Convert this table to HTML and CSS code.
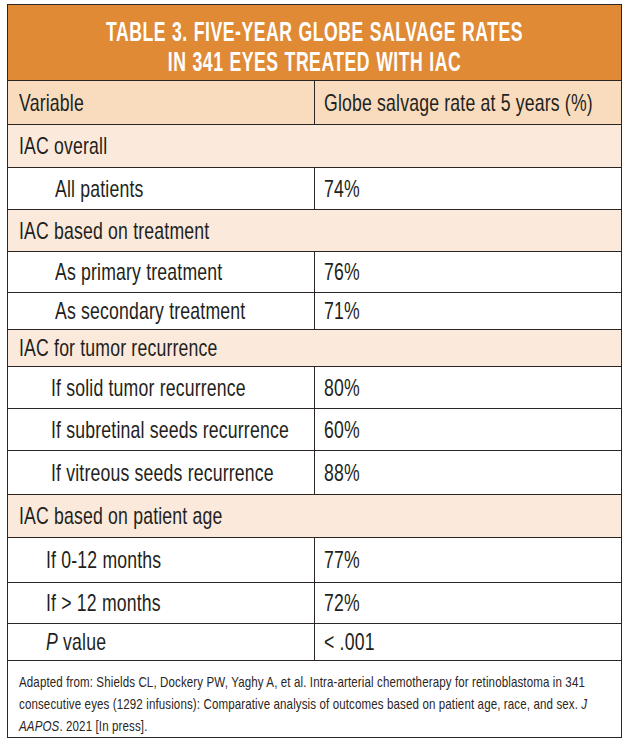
FILE: index.html
```html
<!DOCTYPE html>
<html lang="en">
<head>
<meta charset="utf-8">
<title>Table 3</title>
<link rel="stylesheet" href="styles.css">
</head>
<body>
<div class="page">
  <table class="rates">
    <thead>
      <tr class="title-row">
        <th colspan="2" class="title"><div class="title-text">TABLE 3. FIVE-YEAR GLOBE SALVAGE RATES<br>IN 341 EYES TREATED WITH IAC</div></th>
      </tr>
      <tr class="col-head">
        <th class="c1"><span class="t">Variable</span></th>
        <th class="c2"><span class="t">Globe salvage rate at 5 years (%)</span></th>
      </tr>
    </thead>
    <tbody>
      <tr class="section h43"><td colspan="2"><span class="t">IAC overall</span></td></tr>
      <tr class="h42"><td class="sub s55"><span class="t">All patients</span></td><td class="val"><span class="t">74%</span></td></tr>
      <tr class="section h42"><td colspan="2"><span class="t">IAC based on treatment</span></td></tr>
      <tr class="h41"><td class="sub s55"><span class="t">As primary treatment</span></td><td class="val"><span class="t">76%</span></td></tr>
      <tr class="h37"><td class="sub s55"><span class="t">As secondary treatment</span></td><td class="val"><span class="t">71%</span></td></tr>
      <tr class="section h37"><td colspan="2"><span class="t">IAC for tumor recurrence</span></td></tr>
      <tr class="h42"><td class="sub s51"><span class="t">If solid tumor recurrence</span></td><td class="val"><span class="t">80%</span></td></tr>
      <tr class="h42"><td class="sub s51"><span class="t">If subretinal seeds recurrence</span></td><td class="val"><span class="t">60%</span></td></tr>
      <tr class="h44"><td class="sub s51"><span class="t">If vitreous seeds recurrence</span></td><td class="val"><span class="t">88%</span></td></tr>
      <tr class="section h43"><td colspan="2"><span class="t">IAC based on patient age</span></td></tr>
      <tr class="h45"><td class="sub s46"><span class="t">If 0-12 months</span></td><td class="val"><span class="t">77%</span></td></tr>
      <tr class="h41"><td class="sub s46"><span class="t">If &gt; 12 months</span></td><td class="val"><span class="t">72%</span></td></tr>
      <tr class="h37"><td class="sub s46"><span class="t"><i>P</i> value</span></td><td class="val"><span class="t">&lt; .001</span></td></tr>
    </tbody>
    <tfoot>
      <tr class="note-row">
        <td colspan="2" class="note"><p class="note-text">Adapted from: Shields CL, Dockery PW, Yaghy A, et al. Intra-arterial chemotherapy for retinoblastoma in 341 consecutive eyes (1292 infusions): Comparative analysis of outcomes based on patient age, race, and sex. <i>J</i> <i>AAPOS</i>. 2021 [In press].</p></td>
      </tr>
    </tfoot>
  </table>
</div>
</body>
</html>
```
FILE: styles.css
```css
html, body {
  margin: 0;
  padding: 0;
  background: #ffffff;
}
.page {
  padding: 4px 4px 0 7px;
}
.rates {
  width: 615px;
  border-collapse: collapse;
  table-layout: fixed;
  font-family: "Liberation Sans", Arial, sans-serif;
  color: #231f20;
  border: 1px solid #2b2523;
}
.rates th,
.rates td {
  border: 1px solid #2b2523;
  padding: 0;
  text-align: left;
  font-weight: normal;
  vertical-align: middle;
  overflow: hidden;
}
/* condensed lettering: the source face is a narrow grotesque */
.t {
  display: inline-block;
  white-space: nowrap;
  transform: scaleX(0.735);
  transform-origin: 0 50%;
  letter-spacing: 0.25px;
}
.title {
  background: #e08a35;
  color: #ffffff;
  height: 75px;
  padding: 12px 0 3px 0 !important;
  box-sizing: border-box;
}
.title-text {
  width: 973px;
  text-align: center;
  white-space: nowrap;
  font-weight: bold;
  font-size: 28px;
  line-height: 30px;
  letter-spacing: 0.8px;
  word-spacing: 1px;
  transform: scaleX(0.63);
  transform-origin: 0 0;
}
.col-head th {
  background: #f9dcbe;
  height: 43px;
  font-size: 24px;
}
.col-head .c1 {
  width: 308px;
  padding-left: 11px;
}
.col-head .c2 {
  padding-left: 9px;
}
tbody td {
  height: 40px;
  font-size: 24px;
}
tbody .h37 td { height: 36px; }
tbody .h41 td { height: 40px; }
tbody .h42 td { height: 41px; }
tbody .h43 td { height: 42px; }
tbody .h44 td { height: 43px; }
tbody .h45 td { height: 44px; }
.section td {
  background: #fbeadb;
  padding-left: 11px;
}
.sub.s55 { padding-left: 47px; }
.sub.s51 { padding-left: 43px; }
.sub.s46 { padding-left: 38px; }
.val {
  padding-left: 9px !important;
}
.note {
  padding: 10px 0 0 11px !important;
  color: #2b2523;
}
.note-text {
  margin: 0;
  width: 765px;
  font-size: 15px;
  line-height: 22px;
  transform: scaleX(0.77);
  transform-origin: 0 0;
  letter-spacing: 0.15px;
}
```
